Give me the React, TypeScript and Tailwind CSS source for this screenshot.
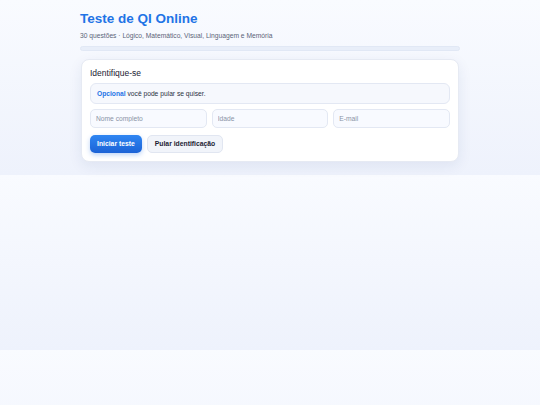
import React from "react";

export default function App() {
    return (
        <div
            className="min-h-[405px] w-full bg-[linear-gradient(180deg,#f9fbff_0%,#eef2fc_100%)] bg-[length:100%_175px] bg-repeat-y"
            style={{ fontFamily: '"Liberation Sans", Arial, sans-serif' }}
        >
            <div className="mx-auto w-[380px] pt-[10px]">
                <h1 className="text-[13.5px] font-bold leading-[18px] text-[#1f74e6]">Teste de QI Online</h1>
                <p className="mt-[3px] text-[6.7px] leading-[9px] text-[#5b6478]">
                    30 questões · Lógico, Matemático, Visual, Linguagem e Memória
                </p>

                <div className="mt-[6px] h-[5px] w-full rounded-full border border-[#e1e8f5] bg-[#e8eef9]" />

                <div className="mx-[1px] mt-[8px] rounded-[8px] border border-[#e6eaf3] bg-white px-[8px] pt-[7px] pb-[8px] shadow-[0_4px_14px_rgba(30,50,110,0.08)]">
                    <h2 className="text-[8.5px] leading-[12px] text-[#1b2233]">Identifique-se</h2>

                    <div className="mt-[4px] rounded-[6px] border border-[#e3e8f3] bg-[#f6f8fd] px-[6px] py-[5px] text-[6.7px] leading-[9px] text-[#2a3142]">
                        <span className="font-bold text-[#1f74e6]">Opcional</span> você pode pular se quiser.
                    </div>

                    <div className="mt-[5px] grid grid-cols-3 gap-[5px]">
                        {["Nome completo", "Idade", "E-mail"].map((p) => (
                            <input
                                key={p}
                                placeholder={p}
                                className="h-[19px] w-full rounded-[5px] border border-[#e3e8f3] bg-[#f8faff] px-[5px] text-[6.7px] text-[#2a3142] outline-none placeholder:text-[#8a93a6]"
                            />
                        ))}
                    </div>

                    <div className="mt-[7px] flex gap-[5px]">
                        <button className="h-[18px] rounded-[5px] bg-[linear-gradient(180deg,#2f86f2_0%,#1b62d6_100%)] px-[7px] text-[6.8px] font-bold text-white shadow-[0_2px_5px_rgba(31,110,230,0.3)]">
                            Iniciar teste
                        </button>
                        <button className="h-[18px] rounded-[5px] border border-[#e1e6f1] bg-[#f1f4fa] px-[7px] text-[6.8px] font-bold text-[#1b2233]">
                            Pular identificação
                        </button>
                    </div>
                </div>
            </div>
        </div>
    );
}
